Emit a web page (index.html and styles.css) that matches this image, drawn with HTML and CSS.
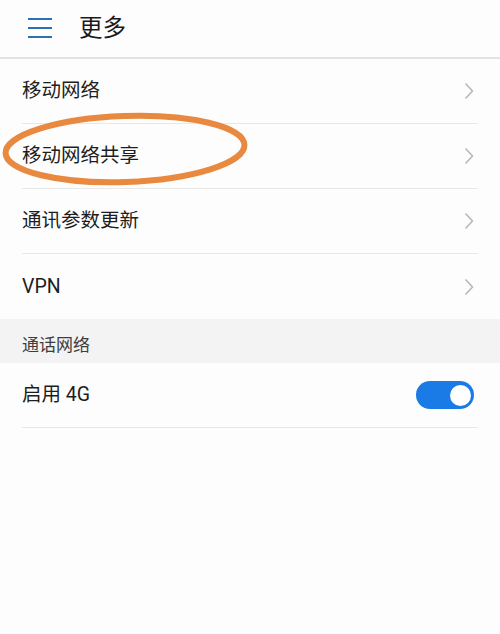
FILE: index.html
```html
<!DOCTYPE html>
<html lang="zh-CN">
<head>
<meta charset="utf-8">
<title>更多</title>
<link rel="stylesheet" href="styles.css">
</head>
<body>
<div class="page">
  <header class="header">
    <svg class="menu" width="26" height="22" viewBox="0 0 26 22">
      <path d="M1 2H25M1 11H25M1 20H25" stroke="#2f70b3" stroke-width="2.2" fill="none"/>
    </svg>
    <div class="title">更多</div>
  </header>
  <ul class="list">
    <li class="row"><span class="label">移动网络</span><svg class="chev" width="10" height="18" viewBox="0 0 10 18"><path d="M1.5 1.5L8.5 9L1.5 16.5" stroke="#b8b8b8" stroke-width="1.6" fill="none"/></svg></li>
    <li class="row"><span class="label">移动网络共享</span><svg class="chev" width="10" height="18" viewBox="0 0 10 18"><path d="M1.5 1.5L8.5 9L1.5 16.5" stroke="#b8b8b8" stroke-width="1.6" fill="none"/></svg></li>
    <li class="row"><span class="label">通讯参数更新</span><svg class="chev" width="10" height="18" viewBox="0 0 10 18"><path d="M1.5 1.5L8.5 9L1.5 16.5" stroke="#b8b8b8" stroke-width="1.6" fill="none"/></svg></li>
    <li class="row last"><span class="label">VPN</span><svg class="chev" width="10" height="18" viewBox="0 0 10 18"><path d="M1.5 1.5L8.5 9L1.5 16.5" stroke="#b8b8b8" stroke-width="1.6" fill="none"/></svg></li>
  </ul>
  <div class="section">通话网络</div>
  <ul class="list">
    <li class="row"><span class="label">启用 4G</span><span class="toggle"><span class="knob"></span></span></li>
  </ul>
  <svg class="ring" width="260" height="90" viewBox="0 0 260 90">
    <ellipse cx="125" cy="41" rx="119.5" ry="33" transform="rotate(-2 125 41)" stroke="#e8893f" stroke-width="6" fill="none"/>
  </svg>
</div>
</body>
</html>
```
FILE: styles.css
```css
* { box-sizing: border-box; }
html, body { margin: 0; padding: 0; }
body {
  background: #fdfdfd;
  font-family: Roboto, "Noto Sans CJK SC", sans-serif;
  color: #1e1e1e;
}
.page {
  position: relative;
  width: 500px;
  height: 634px;
  overflow: hidden;
}
.header {
  height: 59px;
  display: flex;
  align-items: center;
  padding-left: 27px;
  border-bottom: 2px solid #e3e3e3;
  padding-bottom: 2px;
}
.menu { display: block; }
.title {
  margin-left: 26px;
  font-size: 23.5px;
  line-height: 30px;
  color: #1a1a1a;
}
.list {
  list-style: none;
  margin: 0;
  padding: 0;
}
.row {
  height: 65px;
  margin-left: 22px;
  margin-right: 22px;
  display: flex;
  align-items: center;
  justify-content: space-between;
  border-bottom: 1px solid #e8e8e8;
}
.row.last { border-bottom: none; }
.label {
  font-size: 19.5px;
  line-height: 28px;
}
.chev { display: block; margin-right: 4px; }
.section {
  height: 44px;
  background: #f3f3f3;
  padding: 14px 0 0 22px;
  font-size: 17px;
  line-height: 24px;
  color: #3e3e3e;
}
.toggle {
  width: 58px;
  height: 28px;
  border-radius: 14px;
  background: #1b7be6;
  display: flex;
  align-items: center;
  justify-content: flex-end;
  padding-right: 3px;
  margin-right: 4px;
}
.knob {
  width: 21px;
  height: 21px;
  border-radius: 50%;
  background: #fff;
}
.ring {
  position: absolute;
  left: 0;
  top: 108px;
}
```
